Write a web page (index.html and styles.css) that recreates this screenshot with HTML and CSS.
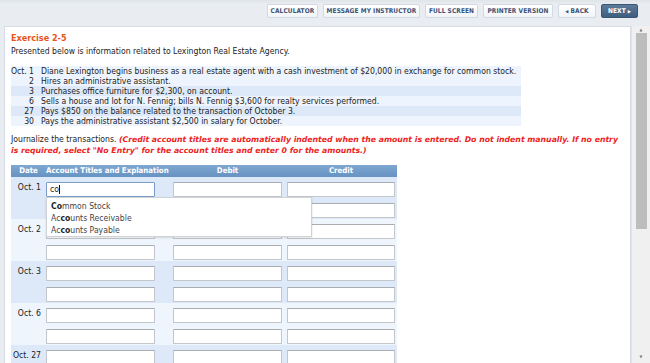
FILE: index.html
```html
<!DOCTYPE html>
<html>
<head>
<meta charset="utf-8">
<link rel="stylesheet" href="styles.css">
</head>
<body>
<div class="toolbar">
  <span class="btn b-calc">CALCULATOR</span>
  <span class="btn b-msg">MESSAGE MY INSTRUCTOR</span>
  <span class="btn b-full">FULL SCREEN</span>
  <span class="btn b-print">PRINTER VERSION</span>
  <span class="btn b-back"><span class="arr">&#9664;</span>BACK</span>
  <span class="btn next">NEXT<span class="arr">&#9654;</span></span>
</div>
<div class="main">
  <div class="panel">
    <div class="title">Exercise 2-5</div>
    <div class="intro">Presented below is information related to Lexington Real Estate Agency.</div>
    <div class="trans">
      <div class="tr t1"><span class="m">Oct.</span><span class="d">1</span><span class="x">Diane Lexington begins business as a real estate agent with a cash investment of $20,000 in exchange for common stock.</span></div>
      <div class="tr t1"><span class="m"></span><span class="d">2</span><span class="x">Hires an administrative assistant.</span></div>
      <div class="tr t2"><span class="m"></span><span class="d">3</span><span class="x">Purchases office furniture for $2,300, on account.</span></div>
      <div class="tr t1"><span class="m"></span><span class="d">6</span><span class="x">Sells a house and lot for N. Fennig; bills N. Fennig $3,600 for realty services performed.</span></div>
      <div class="tr t2"><span class="m"></span><span class="d">27</span><span class="x">Pays $850 on the balance related to the transaction of October 3.</span></div>
      <div class="tr t1"><span class="m"></span><span class="d">30</span><span class="x">Pays the administrative assistant $2,500 in salary for October.</span></div>
    </div>
    <div class="instr">Journalize the transactions. <span class="warn">(Credit account titles are automatically indented when the amount is entered. Do not indent manually. If no entry is required, select "No Entry" for the account titles and enter 0 for the amounts.)</span></div>
    <div class="journal">
      <div class="jhead">
        <span class="c-date">Date</span>
        <span class="c-acct">Account Titles and Explanation</span>
        <span class="c-deb">Debit</span>
        <span class="c-cred">Credit</span>
      </div>
      <div class="grp dark">
        <div class="line"><span class="c-date lbl">Oct. 1</span><span class="inp acct typed">co<span class="caret"></span></span><span class="inp deb"></span><span class="inp cred"></span></div>
        <div class="line"><span class="c-date"></span><span class="inp acct"></span><span class="inp deb"></span><span class="inp cred"></span></div>
        <div class="dropdown">
          <div class="opt"><b>Co</b>mmon Stock</div>
          <div class="opt">Ac<b>co</b>unts Receivable</div>
          <div class="opt">Ac<b>co</b>unts Payable</div>
        </div>
      </div>
      <div class="grp light">
        <div class="line"><span class="c-date lbl">Oct. 2</span><span class="inp acct"></span><span class="inp deb"></span><span class="inp cred"></span></div>
        <div class="line"><span class="c-date"></span><span class="inp acct"></span><span class="inp deb"></span><span class="inp cred"></span></div>
      </div>
      <div class="grp dark">
        <div class="line"><span class="c-date lbl">Oct. 3</span><span class="inp acct"></span><span class="inp deb"></span><span class="inp cred"></span></div>
        <div class="line"><span class="c-date"></span><span class="inp acct"></span><span class="inp deb"></span><span class="inp cred"></span></div>
      </div>
      <div class="grp light">
        <div class="line"><span class="c-date lbl">Oct. 6</span><span class="inp acct"></span><span class="inp deb"></span><span class="inp cred"></span></div>
        <div class="line"><span class="c-date"></span><span class="inp acct"></span><span class="inp deb"></span><span class="inp cred"></span></div>
      </div>
      <div class="grp dark">
        <div class="line"><span class="c-date lbl">Oct. 27</span><span class="inp acct"></span><span class="inp deb"></span><span class="inp cred"></span></div>
        <div class="line"><span class="c-date"></span><span class="inp acct"></span><span class="inp deb"></span><span class="inp cred"></span></div>
      </div>
    </div>
  </div>
  <div class="scrollbar">
    <div class="sb-up">&#9650;</div>
    <div class="sb-thumb"></div>
    <div class="sb-track"></div>
    <div class="sb-down">&#9660;</div>
  </div>
</div>
</body>
</html>
```

FILE: styles.css
```css
html, body {
  margin: 0;
  padding: 0;
}
body {
  width: 650px;
  height: 363px;
  overflow: hidden;
  background: #e9edf1;
  font-family: "DejaVu Sans Condensed", "DejaVu Sans", sans-serif;
  font-size: 8.6px;
  color: #222;
}
.toolbar {
  height: 26px;
  display: flex;
  justify-content: flex-end;
  align-items: flex-start;
  gap: 5px;
  padding: 4px 12px 0 0;
  box-sizing: border-box;
  background: linear-gradient(#dfe4e9, #e9edf1 4px, #e9edf1);
}
.btn {
  height: 14px;
  box-sizing: border-box;
  display: flex;
  align-items: center;
  justify-content: center;
  flex: none;
  background: linear-gradient(#ffffff, #f1f4f7);
  border: 1px solid #d3d9e0;
  border-radius: 2px;
  font-family: "DejaVu Sans Condensed", "DejaVu Sans", sans-serif;
  font-weight: bold;
  font-size: 6.5px;
  color: #3e5275;
  letter-spacing: 0.1px;
}
.b-calc { width: 51px; }
.b-msg { width: 97px; }
.b-full { width: 53px; }
.b-print { width: 70px; }
.b-back { width: 38px; }
.btn .arr {
  font-size: 4.5px;
  margin: 0 2px 0 0;
}
.btn.next {
  background: linear-gradient(#5d7a9a, #3f5d7d);
  border-color: #3b5673;
  color: #fff;
  width: 37px;
}
.btn.next .arr {
  margin: 0 0 0 2px;
}
.main {
  display: flex;
  height: 337px;
}
.panel {
  flex: 1;
  margin-left: 4px;
  background: #fff;
  border: 1px solid #d6dce3;
  border-bottom: 0;
  padding: 5px 0 0 6px;
  overflow: hidden;
  position: relative;
}
.title {
  color: #e8541c;
  font-weight: bold;
  font-size: 9px;
  line-height: 13px;
}
.intro {
  line-height: 12px;
}
.trans {
  margin-top: 9px;
  width: 510px;
}
.tr {
  display: flex;
  height: 10px;
  line-height: 10px;
}
.tr.t1 { background: #eef4fd; }
.tr.t2 { background: #dde9f8; }
.tr .m {
  width: 12px;
  flex: none;
  white-space: nowrap;
}
.tr .d {
  width: 11px;
  flex: none;
  text-align: right;
}
.tr .x {
  padding-left: 7px;
  white-space: nowrap;
}
.instr {
  margin-top: 8px;
  line-height: 11px;
  width: 610px;
}
.warn {
  color: #ee2222;
  font-family: "DejaVu Sans", sans-serif;
  font-weight: bold;
  font-style: italic;
  font-size: 7.75px;
}
.journal {
  margin-top: 9px;
  width: 386px;
}
.jhead {
  display: flex;
  height: 12px;
  line-height: 12px;
  background: linear-gradient(#7fa7d1, #6693c3);
  color: #fff;
  font-weight: bold;
  font-size: 7.8px;
  white-space: nowrap;
}
.c-date {
  width: 35px;
  flex: none;
  text-align: center;
}
.c-acct {
  width: 127px;
  flex: none;
}
.c-deb {
  width: 109px;
  text-align: center;
  flex: none;
}
.c-cred {
  width: 108px;
  margin-left: 5px;
  text-align: center;
  flex: none;
}
.grp {
  height: 42px;
  box-sizing: border-box;
  padding-top: 5px;
  position: relative;
}
.grp.dark { background: #dde9f8; }
.grp.light { background: #eef5fd; }
.line {
  display: flex;
  height: 15px;
  margin-bottom: 6px;
}
.lbl {
  text-align: right;
  box-sizing: border-box;
  padding-right: 5px;
  line-height: 10px;
  color: #222;
  white-space: nowrap;
}
.inp {
  display: block;
  height: 15px;
  box-sizing: border-box;
  background: #fff;
  border: 1px solid #c3c6ca;
  border-top-color: #a9adb2;
  border-radius: 1px;
  flex: none;
}
.inp.acct { width: 109px; }
.inp.deb { width: 109px; margin-left: 18px; }
.inp.cred { width: 108px; margin-left: 5px; }
.inp.typed {
  border-color: #7a9cc7;
  padding-left: 3px;
  line-height: 13px;
  display: flex;
  align-items: center;
}
.caret {
  display: inline-block;
  width: 1px;
  height: 9px;
  background: #111;
}
.dropdown {
  position: absolute;
  left: 35px;
  top: 20px;
  width: 266px;
  height: 40px;
  box-sizing: border-box;
  background: #fff;
  border: 1px solid #cfd2d6;
  box-shadow: 0 1px 2px rgba(0,0,0,0.12);
  padding: 2px 0 0 4px;
  z-index: 2;
}
.opt {
  line-height: 12px;
  color: #444;
}
.opt b {
  color: #222;
}
.scrollbar {
  width: 19px;
  display: flex;
  flex-direction: column;
  align-items: center;
  background: #f0f0f0;
  border-left: 1px solid #e2e2e2;
  box-sizing: border-box;
}
.sb-up, .sb-down {
  height: 7px;
  font-size: 4px;
  line-height: 7px;
  color: #777;
}
.sb-thumb {
  width: 11px;
  height: 196px;
  background: #bdbdbd;
}
.sb-track { flex: 1; }
.sb-down { margin-bottom: 3px; }
```
